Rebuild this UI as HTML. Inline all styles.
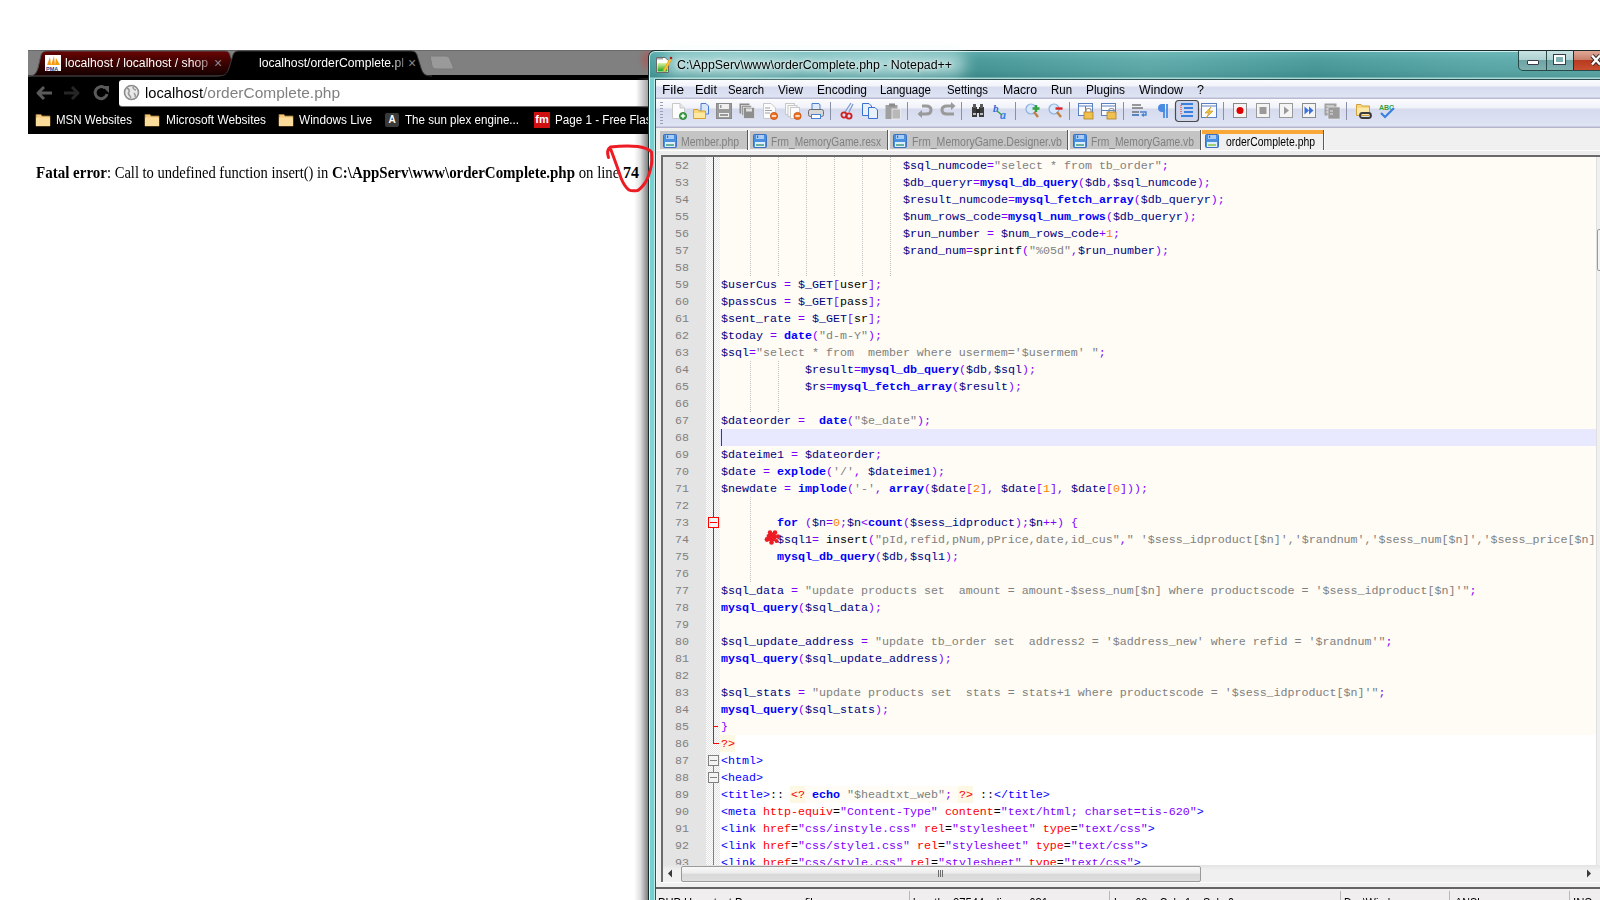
<!DOCTYPE html>
<html><head><meta charset="utf-8"><style>
html,body{margin:0;padding:0}
body{width:1600px;height:900px;overflow:hidden;position:relative;background:#fff}
.t{position:absolute;white-space:pre;transform-origin:0 0;line-height:normal}
.code{position:absolute;white-space:pre;font:11.6667px/17px 'Liberation Mono',monospace;height:17px}
</style></head><body>

<div style="position:absolute;left:28px;top:50px;width:640px;height:84px;background:#000"></div>
<div style="position:absolute;left:28px;top:50px;width:640px;height:25px;background:#808080"></div><div style="position:absolute;left:28px;top:50px;width:640px;height:1px;background:#6a6a6a"></div>
<!-- tab 1 red -->
<svg style="position:absolute;left:28px;top:50px" width="220" height="27">
 <defs><linearGradient id="rg" x1="0" y1="0" x2="0" y2="1"><stop offset="0" stop-color="#6a0404"/><stop offset="0.5" stop-color="#3a0202"/><stop offset="1" stop-color="#140000"/></linearGradient></defs>
 <path d="M0,26 C6,26 8,24 10,18 L13,5 C14,2 16,1 20,1 L196,1 C200,1 201,2 202,5 L206,18 C208,24 210,26 217,26 Z" fill="url(#rg)" stroke="#555" stroke-width="1"/>
</svg>
<!-- tab 2 black active -->
<svg style="position:absolute;left:218px;top:50px" width="222" height="27">
 <path d="M0,27 L0,26 C7,26 9,24 11,18 L15,5 C16,2 18,1 22,1 L192,1 C196,1 198,2 199,5 L203,18 C205,24 207,26 214,26 L214,27 Z" fill="#000"/><path d="M0,26 C7,26 9,24 11,18 L15,5 C16,2 18,1 22,1 L192,1 C196,1 198,2 199,5 L203,18 C205,24 207,26 214,26" fill="none" stroke="#3a3a3a" stroke-width="1"/>
</svg>
<!-- new tab button -->
<svg style="position:absolute;left:428px;top:54px" width="30" height="18">
 <path d="M2,2 L18,2 C20,2 21,3 22,5 L26,15 L8,15 C6,15 5,14 4,12 Z" fill="#9a9a9a" stroke="#7a7a7a" stroke-width="1"/>
</svg>
<!-- omnibox -->
<div style="position:absolute;left:119px;top:80px;width:560px;height:26px;background:#fff;border-radius:3px;box-shadow:0 1px 0 #6a6a6a"></div>
<!-- globe -->
<svg style="position:absolute;left:123px;top:84px" width="17" height="17" viewBox="0 0 17 17">
 <circle cx="8.5" cy="8.5" r="7" fill="#e8e8e8" stroke="#8a8a8a" stroke-width="1.6"/>
 <path d="M4,4 C6,5 7,6 6,8 C5,9 6,11 7,12 L8,14 M10,3 C10,5 12,6 13,6 M11,9 C12,10 13,11 12,13" stroke="#9a9a9a" stroke-width="1.6" fill="none"/>
</svg>
<!-- nav arrows -->
<svg style="position:absolute;left:34px;top:84px" width="80" height="18" viewBox="0 0 80 18">
 <path d="M10,3 L4,9 L10,15 M4,9 L18,9" stroke="#5a5a5a" stroke-width="3" fill="none" stroke-linejoin="round"/>
 <path d="M38,3 L44,9 L38,15 M44,9 L30,9" stroke="#262626" stroke-width="3" fill="none" stroke-linejoin="round"/>
 <path d="M71,4 A6,6 0 1 0 73,10" stroke="#5a5a5a" stroke-width="3" fill="none"/>
 <path d="M68,2 L75,2 L75,9 Z" fill="#5a5a5a"/>
</svg>

<div class="t" style="left:65px;top:56px;font:12px 'Liberation Sans',sans-serif;color:#fff;transform:scaleX(1.0160);-webkit-mask-image:linear-gradient(90deg,#000 88%,rgba(0,0,0,0.45));mask-image:linear-gradient(90deg,#000 88%,rgba(0,0,0,0.45))">localhost / localhost / shop</div>
<svg style="position:absolute;left:45px;top:55px" width="16" height="16" viewBox="0 0 16 16"><rect x="0" y="0" width="16" height="16" fill="#fff"/><path d="M2,10 L5,2 L6,10 Z M6,10 L9,1 L10,10 Z M10,10 L11,3 L15,10 Z" fill="#f89a10"/><text x="1" y="15.5" font-family="Liberation Sans" font-weight="bold" font-size="5.5" fill="#2a3a8a">PMA</text></svg>
<div class="t" style="left:214px;top:55px;font:14px 'Liberation Sans',sans-serif;color:#8a8a8a;">×</div>
<div class="t" style="left:259px;top:56px;font:12px 'Liberation Sans',sans-serif;color:#fff;transform:scaleX(1.0158);-webkit-mask-image:linear-gradient(90deg,#000 90%,rgba(0,0,0,0.4));mask-image:linear-gradient(90deg,#000 90%,rgba(0,0,0,0.4))">localhost/orderComplete.pl</div>
<div class="t" style="left:408px;top:55px;font:14px 'Liberation Sans',sans-serif;color:#8a8a8a;">×</div>
<div class="t" style="left:145px;top:84px;font:15px 'Liberation Sans',sans-serif;color:#000;transform:scaleX(0.9797);">localhost</div>
<div class="t" style="left:203px;top:84px;font:15px 'Liberation Sans',sans-serif;color:#808080;transform:scaleX(1.0334);">/orderComplete.php</div>
<svg style="position:absolute;left:35px;top:112px" width="16" height="15" viewBox="0 0 16 15">
 <path d="M1,2.5 L6,2.5 L7,4 L15,4 L15,14 L1,14 Z" fill="#f4c77a" stroke="#9a7a3a" stroke-width="0.8"/>
 <path d="M1,5.5 L15,5.5 L15,14 L1,14 Z" fill="#fbdc9a"/>
</svg>
<svg style="position:absolute;left:144px;top:112px" width="16" height="15" viewBox="0 0 16 15">
 <path d="M1,2.5 L6,2.5 L7,4 L15,4 L15,14 L1,14 Z" fill="#f4c77a" stroke="#9a7a3a" stroke-width="0.8"/>
 <path d="M1,5.5 L15,5.5 L15,14 L1,14 Z" fill="#fbdc9a"/>
</svg>
<svg style="position:absolute;left:278px;top:112px" width="16" height="15" viewBox="0 0 16 15">
 <path d="M1,2.5 L6,2.5 L7,4 L15,4 L15,14 L1,14 Z" fill="#f4c77a" stroke="#9a7a3a" stroke-width="0.8"/>
 <path d="M1,5.5 L15,5.5 L15,14 L1,14 Z" fill="#fbdc9a"/>
</svg>
<div class="t" style="left:56px;top:113px;font:12px 'Liberation Sans',sans-serif;color:#fff;transform:scaleX(0.9603);">MSN Websites</div>
<div class="t" style="left:166px;top:113px;font:12px 'Liberation Sans',sans-serif;color:#fff;transform:scaleX(0.9887);">Microsoft Websites</div>
<div class="t" style="left:299px;top:113px;font:12px 'Liberation Sans',sans-serif;color:#fff;transform:scaleX(0.9861);">Windows Live</div>
<div style="position:absolute;left:385px;top:113px;width:14px;height:14px;background:#3a3a3a;border-radius:2px;color:#fff;font:bold 10px 'Liberation Sans';text-align:center;line-height:14px">A</div>
<div class="t" style="left:405px;top:113px;font:12px 'Liberation Sans',sans-serif;color:#fff;transform:scaleX(0.9655);">The sun plex engine...</div>
<div style="position:absolute;left:534px;top:112px;width:16px;height:16px;background:#d01010;color:#fff;font:bold 11px 'Liberation Sans';text-align:center;line-height:15px">fm</div>
<div class="t" style="left:555px;top:113px;font:12px 'Liberation Sans',sans-serif;color:#fff;transform:scaleX(0.9711);">Page 1 - Free Flash</div>
<div class="t" style="left:36px;top:164px;font:bold 16px 'Liberation Serif',serif;color:#000;transform:scaleX(0.9383);">Fatal error</div>
<div class="t" style="left:107px;top:164px;font:16px 'Liberation Serif',serif;color:#000;transform:scaleX(0.9091);">: Call to undefined function insert() in </div>
<div class="t" style="left:332px;top:164px;font:bold 16px 'Liberation Serif',serif;color:#000;transform:scaleX(0.9346);">C:\AppServ\www\orderComplete.php</div>
<div class="t" style="left:575px;top:164px;font:16px 'Liberation Serif',serif;color:#000;transform:scaleX(0.9231);"> on line </div>
<div class="t" style="left:623px;top:164px;font:bold 16px 'Liberation Serif',serif;color:#000;transform:scaleX(1.0000);">74</div>
<div style="position:absolute;left:634px;top:134px;width:14px;height:766px;background:linear-gradient(90deg,rgba(0,0,0,0),rgba(0,0,0,0.12) 45%,rgba(0,0,0,0.5))"></div>
<div style="position:absolute;left:636px;top:78px;width:13px;height:30px;background:linear-gradient(90deg,rgba(0,0,0,0),rgba(60,60,60,0.5))"></div><div style="position:absolute;left:636px;top:51px;width:13px;height:24px;overflow:hidden"><div style="position:absolute;left:2px;top:-3px;width:14px;height:26px;background:radial-gradient(ellipse at 70% 45%,rgba(200,60,60,0.55),rgba(200,60,60,0) 70%);filter:blur(1.5px)"></div></div>

<div style="position:absolute;left:648px;top:50px;width:960px;height:860px;background:#1a2c2c;border-top-left-radius:7px"></div>
<div style="position:absolute;left:649px;top:51px;width:960px;height:860px;border-top-left-radius:6px;background:#cdeeee"></div>
<div style="position:absolute;left:650px;top:52px;width:960px;height:860px;border-top-left-radius:5px;
 background:
  linear-gradient(100deg, rgba(255,255,255,0) 0%, rgba(255,255,255,0.12) 8%, rgba(255,255,255,0) 14%, rgba(255,255,255,0.10) 22%, rgba(0,0,0,0.05) 30%, rgba(255,255,255,0.10) 45%, rgba(0,0,0,0.04) 60%, rgba(255,255,255,0.08) 75%, rgba(255,255,255,0.12) 92%, rgba(255,255,255,0.05) 100%),
  linear-gradient(#5fb0b0 0px, #52a4a4 8px, #4a9c9c 18px, #3f9090 25px, #a8d8d8 26px, #72d0d0 27px, #72d0d0 100%)"></div>
<div style="position:absolute;left:649px;top:78px;width:1px;height:830px;background:#dcfafa"></div>
<div style="position:absolute;left:654px;top:78px;width:1px;height:830px;background:#bfeaea"></div>
<div style="position:absolute;left:654px;top:78px;width:960px;height:1px;background:#a8d8d8"></div>
<div style="position:absolute;left:655px;top:79px;width:960px;height:830px;background:#2e5050"></div>
<div style="position:absolute;left:656px;top:80px;width:960px;height:830px;background:#f0f0f0"></div>
<div style="position:absolute;left:665px;top:52px;width:300px;height:24px;background:rgba(230,250,250,0.55);filter:blur(7px);border-radius:10px"></div>
<!-- menu bar -->
<div style="position:absolute;left:656px;top:80px;width:944px;height:19px;background:linear-gradient(#fbfcfe 0px,#f2f4fa 6px,#d6dbee 7px,#dfe4f4 17px,#babbd2 18px,#babbd2 19px)"></div>
<!-- toolbar -->
<div style="position:absolute;left:656px;top:99px;width:944px;height:29px;background:linear-gradient(#fcfcfe 0px,#f0f2f9 9px,#d5daee 10px,#dfe4f4 27px,#b5b6cd 28px,#b5b6cd 29px)"></div>
<!-- gripper -->
<div style="position:absolute;left:660px;top:102px;width:3px;height:22px;background:repeating-linear-gradient(#9aa0b8 0 1px, transparent 1px 3px)"></div>
<!-- tab bar area lines -->
<div style="position:absolute;left:656px;top:150px;width:944px;height:1px;background:#fdfdfd"></div>
<div style="position:absolute;left:656px;top:151px;width:944px;height:3px;background:#ececec"></div>
<!-- caption buttons -->
<div style="position:absolute;left:1518px;top:51px;width:100px;height:19px;border:1px solid #2a4a4a;border-top:none;border-bottom-left-radius:5px;background:linear-gradient(#c8e2e2, #b0d2d2 45%, #6ea4a4 50%, #7fb0b0)"></div>
<div style="position:absolute;left:1546px;top:51px;width:1px;height:19px;background:#2a4a4a"></div>
<div style="position:absolute;left:1573px;top:51px;width:40px;height:19px;background:linear-gradient(#e0a898, #c8806c 45%, #b83a20 50%, #c85030)"></div>
<div style="position:absolute;left:1573px;top:51px;width:1px;height:19px;background:#5a1a10"></div>
<div style="position:absolute;left:1527px;top:60px;width:10px;height:3px;background:#fff;border:1px solid #3a3a4a;border-radius:1px"></div>
<div style="position:absolute;left:1554px;top:55px;width:7px;height:5px;border:2px solid #fff;outline:1px solid #3a3a4a;background:#7fb0b0"></div>
<svg style="position:absolute;left:1590px;top:54px" width="12" height="12"><path d="M2,1.5 L10,10.5 M10,1.5 L2,10.5" stroke="#3a2a2a" stroke-width="4.2"/><path d="M2,1.5 L10,10.5 M10,1.5 L2,10.5" stroke="#fff" stroke-width="2.4"/></svg>
<!-- title icon -->
<svg style="position:absolute;left:655px;top:56px" width="18" height="18" viewBox="0 0 18 18">
 <defs><linearGradient id="ng" x1="0" y1="0" x2="0" y2="1"><stop offset="0" stop-color="#e0f4a0"/><stop offset="1" stop-color="#18a018"/></linearGradient></defs>
 <path d="M1.5,1.5 L10,1.5 L13.5,4.5 L13.5,16.5 L1.5,16.5 Z" fill="#fff" stroke="#6a6a6a" stroke-width="1"/>
 <rect x="2.5" y="7" width="10" height="8.5" fill="url(#ng)"/>
 <path d="M3,2 L3,3.5 M5,2 L5,3.5 M7,2 L7,3.5" stroke="#555" stroke-width="1"/>
 <path d="M9,15 L15.5,3.5" stroke="#f0a818" stroke-width="2.6"/>
 <path d="M9,15 L15.5,3.5" stroke="#ffd860" stroke-width="0.8"/>
 <circle cx="16" cy="2" r="1.3" fill="#b01818"/>
</svg>

<div class="t" style="left:677px;top:58px;font:12px 'Liberation Sans',sans-serif;color:#000;transform:scaleX(1.0307);text-shadow:0 0 6px rgba(255,255,255,0.9),0 0 3px rgba(255,255,255,0.8)">C:\AppServ\www\orderComplete.php - Notepad++</div>
<div class="t" style="left:662px;top:83px;font:12px 'Liberation Sans',sans-serif;color:#000;transform:scaleX(1.1373);">File</div>
<div class="t" style="left:695px;top:83px;font:12px 'Liberation Sans',sans-serif;color:#000;transform:scaleX(1.0634);">Edit</div>
<div class="t" style="left:728px;top:83px;font:12px 'Liberation Sans',sans-serif;color:#000;transform:scaleX(0.9466);">Search</div>
<div class="t" style="left:778px;top:83px;font:12px 'Liberation Sans',sans-serif;color:#000;transform:scaleX(0.9691);">View</div>
<div class="t" style="left:817px;top:83px;font:12px 'Liberation Sans',sans-serif;color:#000;transform:scaleX(0.9991);">Encoding</div>
<div class="t" style="left:880px;top:83px;font:12px 'Liberation Sans',sans-serif;color:#000;transform:scaleX(0.9552);">Language</div>
<div class="t" style="left:947px;top:83px;font:12px 'Liberation Sans',sans-serif;color:#000;transform:scaleX(0.9456);">Settings</div>
<div class="t" style="left:1003px;top:83px;font:12px 'Liberation Sans',sans-serif;color:#000;transform:scaleX(1.0197);">Macro</div>
<div class="t" style="left:1051px;top:83px;font:12px 'Liberation Sans',sans-serif;color:#000;transform:scaleX(0.9539);">Run</div>
<div class="t" style="left:1086px;top:83px;font:12px 'Liberation Sans',sans-serif;color:#000;transform:scaleX(0.9909);">Plugins</div>
<div class="t" style="left:1139px;top:83px;font:12px 'Liberation Sans',sans-serif;color:#000;transform:scaleX(1.0307);">Window</div>
<div class="t" style="left:1197px;top:83px;font:12px 'Liberation Sans',sans-serif;color:#000;transform:scaleX(1.0467);">?</div>
<div style="position:absolute;left:830px;top:102px;width:1px;height:18px;background:#8a8fa8"></div>
<div style="position:absolute;left:907px;top:102px;width:1px;height:18px;background:#8a8fa8"></div>
<div style="position:absolute;left:961px;top:102px;width:1px;height:18px;background:#8a8fa8"></div>
<div style="position:absolute;left:1015px;top:102px;width:1px;height:18px;background:#8a8fa8"></div>
<div style="position:absolute;left:1069px;top:102px;width:1px;height:18px;background:#8a8fa8"></div>
<div style="position:absolute;left:1123px;top:102px;width:1px;height:18px;background:#8a8fa8"></div>
<div style="position:absolute;left:1223px;top:102px;width:1px;height:18px;background:#8a8fa8"></div>
<div style="position:absolute;left:1346px;top:102px;width:1px;height:18px;background:#8a8fa8"></div>
<svg style="position:absolute;left:0;top:0" width="1600" height="130"><g transform="translate(671,103)"><path d="M1.5,0.5 L9,0.5 L13.5,5 L13.5,15.5 L1.5,15.5 Z" fill="#fcfcfc" stroke="#c8c8c8"/><path d="M9,0.5 L9,5 L13.5,5" fill="#e8e8e8" stroke="#c8c8c8"/><circle cx="12" cy="13" r="3.6" fill="#3aa040" stroke="#2a7a30" stroke-width="0.8"/><path d="M12,10.8 L12,15.2 M9.8,13 L14.2,13" stroke="#fff" stroke-width="1.4"/></g><g transform="translate(693,103)"><path d="M8,0.5 L13,0.5 L15.5,3 L15.5,11 L8,11 Z" fill="#d8e8fc" stroke="#4a7ad0"/><path d="M0.5,6.5 L5,6.5 L6,8 L12.5,8 L12.5,15.5 L0.5,15.5 Z" fill="#f8d878" stroke="#d8a030"/><path d="M1,10 L12,10 L12,15 L1,15 Z" fill="#fce8a0"/></g><g transform="translate(716,103)"><rect x="0.5" y="0.5" width="15" height="15" fill="#9a9a9a" stroke="#8a8a8a"/><rect x="3" y="1" width="10" height="5" fill="#f0f0f0"/><rect x="4" y="2" width="1.5" height="3" fill="#9a9a9a"/><rect x="3" y="10" width="10" height="4" fill="#f0f0f0"/><rect x="4" y="11" width="8" height="2" fill="#9a9a9a"/></g><g transform="translate(739,103)"><rect x="0.5" y="0.5" width="10" height="10" fill="#8a8a8a"/><rect x="2.5" y="2.5" width="10" height="10" fill="#999" stroke="#f0f0f0" stroke-width="0.6"/><rect x="4.5" y="4.5" width="11" height="11" fill="#8e8e8e" stroke="#f0f0f0" stroke-width="0.6"/><rect x="7" y="5.5" width="6" height="3" fill="#e0e0e0"/></g><g transform="translate(762,103)"><path d="M1.5,0.5 L9,0.5 L13.5,5 L13.5,15.5 L1.5,15.5 Z" fill="#fcfcfc" stroke="#c8c8c8"/><path d="M3,5 L8,5 M3,7.5 L10,7.5 M3,10 L8,10" stroke="#a0a0a0"/><circle cx="12" cy="13" r="3.6" fill="#f07020" stroke="#c05010" stroke-width="0.8"/><path d="M9.8,13 L14.2,13" stroke="#fff" stroke-width="1.5"/></g><g transform="translate(785,103)"><rect x="0.5" y="0.5" width="9" height="11" fill="#fafafa" stroke="#c8c8c8"/><rect x="3" y="2.5" width="9" height="11" fill="#fafafa" stroke="#c8c8c8"/><rect x="5.5" y="4.5" width="9" height="11" fill="#fcfcfc" stroke="#c8c8c8"/><circle cx="12.5" cy="13" r="3.6" fill="#f07020" stroke="#c05010" stroke-width="0.8"/><path d="M10.3,13 L14.7,13" stroke="#fff" stroke-width="1.5"/></g><g transform="translate(808,103)"><path d="M4,0.5 L11,0.5 L12,2 L12,7 L4,7 Z" fill="#e0ecfc" stroke="#4a80d0"/><rect x="0.5" y="6.5" width="15" height="7" rx="2" fill="#d8d8d8" stroke="#6a6a6a"/><rect x="3.5" y="11.5" width="9" height="4" fill="#fff" stroke="#4a80d0"/></g><g transform="translate(840,103)"><path d="M5,9 L11,0 M9,9 L13,1" stroke="#7a9ad0" stroke-width="1.3"/><circle cx="4" cy="12" r="2.6" fill="none" stroke="#d02020" stroke-width="1.8"/><circle cx="9" cy="13" r="2.6" fill="none" stroke="#d02020" stroke-width="1.8"/></g><g transform="translate(862,103)"><path d="M0.5,0.5 L7,0.5 L9.5,3 L9.5,12.5 L0.5,12.5 Z" fill="#e8f0fc" stroke="#3a70d0"/><path d="M6.5,4.5 L13,4.5 L15.5,7 L15.5,15.5 L6.5,15.5 Z" fill="#e8f0fc" stroke="#3a70d0"/></g><g transform="translate(885,103)"><rect x="0.5" y="2" width="12" height="14" fill="#a0a0a0"/><rect x="4" y="0.5" width="6" height="3" fill="#8a8a8a"/><rect x="7" y="6" width="8.5" height="10" fill="#b8b8b8" stroke="#f0f0f0" stroke-width="0.8"/></g><g transform="translate(917,103)"><path d="M2,11 L9,11 C13,11 14,9 14,7 C14,5 13,3 9,3 L5,3" fill="none" stroke="#9a9a9a" stroke-width="3"/><path d="M0.5,11 L5,7 L5,15 Z" fill="#9a9a9a"/></g><g transform="translate(940,103)"><path d="M14,11 L7,11 C3,11 2,9 2,7 C2,5 3,3 7,3 L11,3" fill="none" stroke="#9a9a9a" stroke-width="3"/><path d="M15.5,3 L11,-1 L11,7 Z" fill="#9a9a9a"/></g><g transform="translate(971,103)"><rect x="1" y="4" width="5" height="10" fill="#3a3a3a"/><rect x="8" y="4" width="5" height="10" fill="#3a3a3a"/><rect x="2" y="1" width="3" height="4" fill="#5a5a5a"/><rect x="9" y="1" width="3" height="4" fill="#5a5a5a"/><rect x="5" y="6" width="4" height="4" fill="#2a2a2a"/><rect x="2" y="10" width="3" height="2" fill="#bbb"/><rect x="9" y="10" width="3" height="2" fill="#bbb"/></g><g transform="translate(993,103)"><text x="0" y="9" font-family="Liberation Serif" font-style="italic" font-weight="bold" font-size="11" fill="#2a6ad8">b</text><text x="7" y="16" font-family="Liberation Serif" font-style="italic" font-weight="bold" font-size="12" fill="#3a80e0">a</text><path d="M4,8 L9,12" stroke="#30a040" stroke-width="1.5"/></g><g transform="translate(1025,103)"><circle cx="6" cy="6" r="5" fill="#d8e8fc" stroke="#8ab0e0" stroke-width="1.2"/><path d="M9,9 L13,14" stroke="#c08040" stroke-width="2.4"/><path d="M11,2 L11,9 M7.5,5.5 L14.5,5.5" stroke="#30a040" stroke-width="2.4"/></g><g transform="translate(1048,103)"><circle cx="6" cy="6" r="5" fill="#d8e8fc" stroke="#8ab0e0" stroke-width="1.2"/><path d="M9,9 L13,14" stroke="#c08040" stroke-width="2.4"/><path d="M7.5,5.5 L14.5,5.5" stroke="#e02020" stroke-width="2.4"/></g><g transform="translate(1078,103)"><rect x="0.5" y="0.5" width="14" height="12" fill="#fafcff" stroke="#5a80c0"/><path d="M0.5,3 L14.5,3 M7.5,3 L7.5,12.5" stroke="#5a80c0"/><rect x="6" y="9" width="9" height="7" fill="#f0c050" stroke="#b08020" stroke-width="0.8"/><path d="M8,9 L8,7 C8,5 13,5 13,7 L13,9" fill="none" stroke="#909090" stroke-width="1.2"/></g><g transform="translate(1101,103)"><rect x="0.5" y="0.5" width="14" height="12" fill="#fafcff" stroke="#5a80c0"/><path d="M0.5,3 L14.5,3 M0.5,7.5 L14.5,7.5" stroke="#5a80c0"/><rect x="6" y="9" width="9" height="7" fill="#f0c050" stroke="#b08020" stroke-width="0.8"/><path d="M8,9 L8,7 C8,5 13,5 13,7 L13,9" fill="none" stroke="#909090" stroke-width="1.2"/></g><g transform="translate(1131,103)"><path d="M1,2 L10,2 M1,5 L12,5 M1,9 L8,9 M1,12 L8,12" stroke="#3a3a3a" stroke-width="1.2"/><path d="M1,12 L8,12" stroke="#4a80d0" stroke-width="1.5"/><path d="M9,9 L15,9 L15,12 L11,12" fill="none" stroke="#4a80d0" stroke-width="1.4"/><path d="M10,12 L13,10 L13,14 Z" fill="#4a80d0"/></g><g transform="translate(1157,103)"><path d="M7,1 L7,15 M10,1 L10,15" stroke="#4a8ae0" stroke-width="1.8"/><path d="M8,1 L5,1 C2,1 1,3 1,5 C1,7 2,9 5,9 L8,9 Z" fill="#4a8ae0"/></g><g transform="translate(1175,102)"><rect x="0.5" y="-1.5" width="23" height="21" rx="3" fill="#cfd6ec" stroke="#4a4a4a" stroke-width="1.2"/><path d="M6,2 L18,2 M9,6 L18,6 M9,10 L18,10 M6,14 L18,14" stroke="#3a80e0" stroke-width="1.8"/><path d="M6,3 L6,13" stroke="#e02020" stroke-width="1" stroke-dasharray="1,1"/></g><g transform="translate(1201,103)"><rect x="0.5" y="0.5" width="15" height="14" fill="#fafcff" stroke="#5a80c0"/><path d="M0.5,3 L15.5,3" stroke="#5a80c0"/><path d="M10,4 L4,10 L8,10 L5,15 L12,8 L8,8 Z" fill="#f0c040" stroke="#c09020" stroke-width="0.6"/></g><g transform="translate(1233,103)"><rect x="0.5" y="0.5" width="13" height="14" fill="#f4f4f4" stroke="#8a8a8a"/><circle cx="7" cy="7.5" r="3.5" fill="#e00000"/></g><g transform="translate(1256,103)"><rect x="0.5" y="0.5" width="13" height="14" fill="#f4f4f4" stroke="#9a9a9a"/><rect x="3.5" y="4" width="7" height="7" fill="#9a9a9a"/></g><g transform="translate(1279,103)"><rect x="0.5" y="0.5" width="13" height="14" fill="#f4f4f4" stroke="#9a9a9a"/><path d="M5,3.5 L10,7.5 L5,11.5 Z" fill="#9a9a9a"/></g><g transform="translate(1302,103)"><rect x="0.5" y="0.5" width="13" height="14" fill="#f4f4f4" stroke="#8a8a8a"/><path d="M2.5,3.5 L7,7.5 L2.5,11.5 Z M7,3.5 L11.5,7.5 L7,11.5 Z" fill="#3a70e0"/></g><g transform="translate(1324,103)"><rect x="0.5" y="0.5" width="12" height="12" fill="#a0a0a0"/><rect x="4" y="4" width="12" height="12" fill="#9a9a9a" stroke="#f0f0f0" stroke-width="0.6"/><path d="M2,3 L10,3 M2,6 L4,6 M2,9 L4,9 M6,8 L9,8 M6,11 L9,11" stroke="#e8e8e8" stroke-width="1"/></g><g transform="translate(1356,103)"><path d="M0.5,1.5 L5,1.5 L6,3 L13.5,3 L13.5,12.5 L0.5,12.5 Z" fill="#f8d878" stroke="#d0a040"/><path d="M1,5 L13,5 L13,12 L1,12 Z" fill="#fce8a8"/><rect x="4" y="10" width="11" height="5" rx="2.5" fill="none" stroke="#3a3a3a" stroke-width="1.8"/></g><g transform="translate(1378,103)"><text x="1" y="7" font-family="Liberation Sans" font-weight="bold" font-size="7" fill="#30a040">ABC</text><path d="M3,10 L7,14 L16,5" fill="none" stroke="#3a80e0" stroke-width="2.2"/></g></svg>
<div style="position:absolute;left:660px;top:131px;width:87px;height:18px;background:#c4c4c4"></div>
<div style="position:absolute;left:747px;top:130px;width:1px;height:20px;background:#5a5a5a"></div><div style="position:absolute;left:748px;top:130px;width:1px;height:20px;background:#fafafa"></div>
<svg style="position:absolute;left:663px;top:134px" width="14" height="14" viewBox="0 0 14 14"><rect x="0.5" y="0.5" width="13" height="13" rx="1" fill="#4a90e0" stroke="#3a70c0"/><rect x="3" y="1" width="8" height="4" fill="#a8ccf4"/><rect x="4" y="1.5" width="1.2" height="2.5" fill="#3a70c0"/><rect x="2" y="8" width="10" height="5" fill="#e0eefc"/><rect x="3" y="10" width="8" height="2" fill="#6ab0a0"/></svg>
<div class="t" style="left:681px;top:135px;font:12px 'Liberation Sans',sans-serif;color:#808080;transform:scaleX(0.8695);">Member.php</div>
<div style="position:absolute;left:750px;top:131px;width:137px;height:18px;background:#c4c4c4"></div>
<div style="position:absolute;left:887px;top:130px;width:1px;height:20px;background:#5a5a5a"></div><div style="position:absolute;left:888px;top:130px;width:1px;height:20px;background:#fafafa"></div>
<svg style="position:absolute;left:753px;top:134px" width="14" height="14" viewBox="0 0 14 14"><rect x="0.5" y="0.5" width="13" height="13" rx="1" fill="#4a90e0" stroke="#3a70c0"/><rect x="3" y="1" width="8" height="4" fill="#a8ccf4"/><rect x="4" y="1.5" width="1.2" height="2.5" fill="#3a70c0"/><rect x="2" y="8" width="10" height="5" fill="#e0eefc"/><rect x="3" y="10" width="8" height="2" fill="#6ab0a0"/></svg>
<div class="t" style="left:771px;top:135px;font:12px 'Liberation Sans',sans-serif;color:#808080;transform:scaleX(0.8461);">Frm_MemoryGame.resx</div>
<div style="position:absolute;left:890px;top:131px;width:177px;height:18px;background:#c4c4c4"></div>
<div style="position:absolute;left:1067px;top:130px;width:1px;height:20px;background:#5a5a5a"></div><div style="position:absolute;left:1068px;top:130px;width:1px;height:20px;background:#fafafa"></div>
<svg style="position:absolute;left:893px;top:134px" width="14" height="14" viewBox="0 0 14 14"><rect x="0.5" y="0.5" width="13" height="13" rx="1" fill="#4a90e0" stroke="#3a70c0"/><rect x="3" y="1" width="8" height="4" fill="#a8ccf4"/><rect x="4" y="1.5" width="1.2" height="2.5" fill="#3a70c0"/><rect x="2" y="8" width="10" height="5" fill="#e0eefc"/><rect x="3" y="10" width="8" height="2" fill="#6ab0a0"/></svg>
<div class="t" style="left:912px;top:135px;font:12px 'Liberation Sans',sans-serif;color:#808080;transform:scaleX(0.8786);">Frm_MemoryGame.Designer.vb</div>
<div style="position:absolute;left:1070px;top:131px;width:130px;height:18px;background:#c4c4c4"></div>
<div style="position:absolute;left:1200px;top:130px;width:1px;height:20px;background:#5a5a5a"></div><div style="position:absolute;left:1201px;top:130px;width:1px;height:20px;background:#fafafa"></div>
<svg style="position:absolute;left:1073px;top:134px" width="14" height="14" viewBox="0 0 14 14"><rect x="0.5" y="0.5" width="13" height="13" rx="1" fill="#4a90e0" stroke="#3a70c0"/><rect x="3" y="1" width="8" height="4" fill="#a8ccf4"/><rect x="4" y="1.5" width="1.2" height="2.5" fill="#3a70c0"/><rect x="2" y="8" width="10" height="5" fill="#e0eefc"/><rect x="3" y="10" width="8" height="2" fill="#6ab0a0"/></svg>
<div class="t" style="left:1091px;top:135px;font:12px 'Liberation Sans',sans-serif;color:#808080;transform:scaleX(0.8581);">Frm_MemoryGame.vb</div>
<div style="position:absolute;left:1202px;top:130px;width:121px;height:4px;background:#faa73a"></div>
<div style="position:absolute;left:1323px;top:130px;width:1px;height:20px;background:#5a5a5a"></div><div style="position:absolute;left:1324px;top:130px;width:1px;height:20px;background:#fafafa"></div>
<svg style="position:absolute;left:1205px;top:134px" width="14" height="14" viewBox="0 0 14 14"><rect x="0.5" y="0.5" width="13" height="13" rx="1" fill="#4a90e0" stroke="#3a70c0"/><rect x="3" y="1" width="8" height="4" fill="#a8ccf4"/><rect x="4" y="1.5" width="1.2" height="2.5" fill="#3a70c0"/><rect x="2" y="8" width="10" height="5" fill="#e0eefc"/><rect x="3" y="10" width="8" height="2" fill="#9ad070"/></svg>
<div class="t" style="left:1226px;top:135px;font:12px 'Liberation Sans',sans-serif;color:#000;transform:scaleX(0.8663);">orderComplete.php</div>

<div style="position:absolute;left:656px;top:155px;width:5px;height:727px;background:linear-gradient(90deg,#fafafa 1px,#efefef 1px)"></div><div style="position:absolute;left:661px;top:155px;width:950px;height:728px;background:#6a6a6a"></div>
<div style="position:absolute;left:661px;top:156px;width:950px;height:726px;background:#6a6a6a"></div><div style="position:absolute;left:661px;top:882px;width:950px;height:1px;background:#fcfcfc"></div>
<div style="position:absolute;left:663px;top:157px;width:950px;height:725px;background:#fff"></div>
<div style="position:absolute;left:663px;top:157px;width:43px;height:708px;background:#e4e4e4"></div>
<div style="position:absolute;left:706px;top:157px;width:14px;height:708px;background-color:#fff;background-image:repeating-conic-gradient(#e2e2e2 0 25%, #ffffff 0 50%);background-size:2px 2px"></div>

<div style="position:absolute;left:720px;top:157px;width:876px;height:578px;background:#fefcf5"></div>
<div style="position:absolute;left:720px;top:429px;width:876px;height:17px;background:#e8e8ff"></div>
<div style="position:absolute;left:721px;top:429px;width:1px;height:17px;background:#8000ff"></div>
<div style="position:absolute;left:720px;top:735px;width:15px;height:17px;background:#fdf8e3"></div>
<div style="position:absolute;left:790px;top:786px;width:183px;height:17px;background:#fefcf5"></div>
<div style="position:absolute;left:790px;top:786px;width:15px;height:17px;background:#fdf8e3"></div>
<div style="position:absolute;left:958px;top:786px;width:15px;height:17px;background:#fdf8e3"></div>
<div style="position:absolute;left:750px;top:157px;width:1px;height:119px;background:repeating-linear-gradient(#c0c0c0 0 1px, transparent 1px 2px)"></div>
<div style="position:absolute;left:778px;top:157px;width:1px;height:119px;background:repeating-linear-gradient(#c0c0c0 0 1px, transparent 1px 2px)"></div>
<div style="position:absolute;left:806px;top:157px;width:1px;height:119px;background:repeating-linear-gradient(#c0c0c0 0 1px, transparent 1px 2px)"></div>
<div style="position:absolute;left:834px;top:157px;width:1px;height:119px;background:repeating-linear-gradient(#c0c0c0 0 1px, transparent 1px 2px)"></div>
<div style="position:absolute;left:862px;top:157px;width:1px;height:119px;background:repeating-linear-gradient(#c0c0c0 0 1px, transparent 1px 2px)"></div>
<div style="position:absolute;left:890px;top:157px;width:1px;height:119px;background:repeating-linear-gradient(#c0c0c0 0 1px, transparent 1px 2px)"></div>
<div style="position:absolute;left:750px;top:361px;width:1px;height:51px;background:repeating-linear-gradient(#c0c0c0 0 1px, transparent 1px 2px)"></div>
<div style="position:absolute;left:778px;top:361px;width:1px;height:51px;background:repeating-linear-gradient(#c0c0c0 0 1px, transparent 1px 2px)"></div>
<div style="position:absolute;left:750px;top:497px;width:1px;height:85px;background:repeating-linear-gradient(#c0c0c0 0 1px, transparent 1px 2px)"></div>
<div style="position:absolute;left:713px;top:157px;width:1px;height:587px;background:#ff0000"></div>
<div style="position:absolute;left:713px;top:726px;width:5px;height:1px;background:#ff0000"></div>
<div style="position:absolute;left:713px;top:743px;width:6px;height:1px;background:#ff0000"></div>
<div style="position:absolute;left:708px;top:517px;width:9px;height:9px;border:1px solid #ff0000;background:#f3f3f3"></div>
<div style="position:absolute;left:710px;top:522px;width:7px;height:1px;background:#ff0000"></div>
<div style="position:absolute;left:713px;top:766px;width:1px;height:99px;background:#808080"></div>
<div style="position:absolute;left:708px;top:755px;width:9px;height:9px;border:1px solid #808080;background:#f3f3f3"></div>
<div style="position:absolute;left:710px;top:760px;width:7px;height:1px;background:#808080"></div>
<div style="position:absolute;left:708px;top:772px;width:9px;height:9px;border:1px solid #808080;background:#f3f3f3"></div>
<div style="position:absolute;left:710px;top:777px;width:7px;height:1px;background:#808080"></div>
<div class="t" style="left:675px;top:158px;font:11.6667px/17px 'Liberation Mono',monospace;color:#808080;">52</div>
<div class="t" style="left:675px;top:175px;font:11.6667px/17px 'Liberation Mono',monospace;color:#808080;">53</div>
<div class="t" style="left:675px;top:192px;font:11.6667px/17px 'Liberation Mono',monospace;color:#808080;">54</div>
<div class="t" style="left:675px;top:209px;font:11.6667px/17px 'Liberation Mono',monospace;color:#808080;">55</div>
<div class="t" style="left:675px;top:226px;font:11.6667px/17px 'Liberation Mono',monospace;color:#808080;">56</div>
<div class="t" style="left:675px;top:243px;font:11.6667px/17px 'Liberation Mono',monospace;color:#808080;">57</div>
<div class="t" style="left:675px;top:260px;font:11.6667px/17px 'Liberation Mono',monospace;color:#808080;">58</div>
<div class="t" style="left:675px;top:277px;font:11.6667px/17px 'Liberation Mono',monospace;color:#808080;">59</div>
<div class="t" style="left:675px;top:294px;font:11.6667px/17px 'Liberation Mono',monospace;color:#808080;">60</div>
<div class="t" style="left:675px;top:311px;font:11.6667px/17px 'Liberation Mono',monospace;color:#808080;">61</div>
<div class="t" style="left:675px;top:328px;font:11.6667px/17px 'Liberation Mono',monospace;color:#808080;">62</div>
<div class="t" style="left:675px;top:345px;font:11.6667px/17px 'Liberation Mono',monospace;color:#808080;">63</div>
<div class="t" style="left:675px;top:362px;font:11.6667px/17px 'Liberation Mono',monospace;color:#808080;">64</div>
<div class="t" style="left:675px;top:379px;font:11.6667px/17px 'Liberation Mono',monospace;color:#808080;">65</div>
<div class="t" style="left:675px;top:396px;font:11.6667px/17px 'Liberation Mono',monospace;color:#808080;">66</div>
<div class="t" style="left:675px;top:413px;font:11.6667px/17px 'Liberation Mono',monospace;color:#808080;">67</div>
<div class="t" style="left:675px;top:430px;font:11.6667px/17px 'Liberation Mono',monospace;color:#808080;">68</div>
<div class="t" style="left:675px;top:447px;font:11.6667px/17px 'Liberation Mono',monospace;color:#808080;">69</div>
<div class="t" style="left:675px;top:464px;font:11.6667px/17px 'Liberation Mono',monospace;color:#808080;">70</div>
<div class="t" style="left:675px;top:481px;font:11.6667px/17px 'Liberation Mono',monospace;color:#808080;">71</div>
<div class="t" style="left:675px;top:498px;font:11.6667px/17px 'Liberation Mono',monospace;color:#808080;">72</div>
<div class="t" style="left:675px;top:515px;font:11.6667px/17px 'Liberation Mono',monospace;color:#808080;">73</div>
<div class="t" style="left:675px;top:532px;font:11.6667px/17px 'Liberation Mono',monospace;color:#808080;">74</div>
<div class="t" style="left:675px;top:549px;font:11.6667px/17px 'Liberation Mono',monospace;color:#808080;">75</div>
<div class="t" style="left:675px;top:566px;font:11.6667px/17px 'Liberation Mono',monospace;color:#808080;">76</div>
<div class="t" style="left:675px;top:583px;font:11.6667px/17px 'Liberation Mono',monospace;color:#808080;">77</div>
<div class="t" style="left:675px;top:600px;font:11.6667px/17px 'Liberation Mono',monospace;color:#808080;">78</div>
<div class="t" style="left:675px;top:617px;font:11.6667px/17px 'Liberation Mono',monospace;color:#808080;">79</div>
<div class="t" style="left:675px;top:634px;font:11.6667px/17px 'Liberation Mono',monospace;color:#808080;">80</div>
<div class="t" style="left:675px;top:651px;font:11.6667px/17px 'Liberation Mono',monospace;color:#808080;">81</div>
<div class="t" style="left:675px;top:668px;font:11.6667px/17px 'Liberation Mono',monospace;color:#808080;">82</div>
<div class="t" style="left:675px;top:685px;font:11.6667px/17px 'Liberation Mono',monospace;color:#808080;">83</div>
<div class="t" style="left:675px;top:702px;font:11.6667px/17px 'Liberation Mono',monospace;color:#808080;">84</div>
<div class="t" style="left:675px;top:719px;font:11.6667px/17px 'Liberation Mono',monospace;color:#808080;">85</div>
<div class="t" style="left:675px;top:736px;font:11.6667px/17px 'Liberation Mono',monospace;color:#808080;">86</div>
<div class="t" style="left:675px;top:753px;font:11.6667px/17px 'Liberation Mono',monospace;color:#808080;">87</div>
<div class="t" style="left:675px;top:770px;font:11.6667px/17px 'Liberation Mono',monospace;color:#808080;">88</div>
<div class="t" style="left:675px;top:787px;font:11.6667px/17px 'Liberation Mono',monospace;color:#808080;">89</div>
<div class="t" style="left:675px;top:804px;font:11.6667px/17px 'Liberation Mono',monospace;color:#808080;">90</div>
<div class="t" style="left:675px;top:821px;font:11.6667px/17px 'Liberation Mono',monospace;color:#808080;">91</div>
<div class="t" style="left:675px;top:838px;font:11.6667px/17px 'Liberation Mono',monospace;color:#808080;">92</div>
<div class="t" style="left:675px;top:855px;font:11.6667px/17px 'Liberation Mono',monospace;color:#808080;">93</div>
<div class="code" style="left:903px;top:158px"><span style="color:#000080;">$sql_numcode</span><span style="color:#8000ff;">=</span><span style="color:#808080;">&quot;select * from tb_order&quot;</span><span style="color:#8000ff;">;</span></div>
<div class="code" style="left:903px;top:175px"><span style="color:#000080;">$db_queryr</span><span style="color:#8000ff;">=</span><span style="color:#0000ff;font-weight:bold;">mysql_db_query</span><span style="color:#8000ff;">(</span><span style="color:#000080;">$db</span><span style="color:#8000ff;">,</span><span style="color:#000080;">$sql_numcode</span><span style="color:#8000ff;">)</span><span style="color:#8000ff;">;</span></div>
<div class="code" style="left:903px;top:192px"><span style="color:#000080;">$result_numcode</span><span style="color:#8000ff;">=</span><span style="color:#0000ff;font-weight:bold;">mysql_fetch_array</span><span style="color:#8000ff;">(</span><span style="color:#000080;">$db_queryr</span><span style="color:#8000ff;">)</span><span style="color:#8000ff;">;</span></div>
<div class="code" style="left:903px;top:209px"><span style="color:#000080;">$num_rows_code</span><span style="color:#8000ff;">=</span><span style="color:#0000ff;font-weight:bold;">mysql_num_rows</span><span style="color:#8000ff;">(</span><span style="color:#000080;">$db_queryr</span><span style="color:#8000ff;">)</span><span style="color:#8000ff;">;</span></div>
<div class="code" style="left:903px;top:226px"><span style="color:#000080;">$run_number</span><span style="color:#000000;"> </span><span style="color:#8000ff;">=</span><span style="color:#000000;"> </span><span style="color:#000080;">$num_rows_code</span><span style="color:#8000ff;">+</span><span style="color:#ff8000;">1</span><span style="color:#8000ff;">;</span></div>
<div class="code" style="left:903px;top:243px"><span style="color:#000080;">$rand_num</span><span style="color:#8000ff;">=</span><span style="color:#000000;">sprintf</span><span style="color:#8000ff;">(</span><span style="color:#808080;">&quot;%05d&quot;</span><span style="color:#8000ff;">,</span><span style="color:#000080;">$run_number</span><span style="color:#8000ff;">)</span><span style="color:#8000ff;">;</span></div>
<div class="code" style="left:721px;top:277px"><span style="color:#000080;">$userCus</span><span style="color:#000000;"> </span><span style="color:#8000ff;">=</span><span style="color:#000000;"> </span><span style="color:#000080;">$_GET</span><span style="color:#8000ff;">[</span><span style="color:#000000;">user</span><span style="color:#8000ff;">]</span><span style="color:#8000ff;">;</span></div>
<div class="code" style="left:721px;top:294px"><span style="color:#000080;">$passCus</span><span style="color:#000000;"> </span><span style="color:#8000ff;">=</span><span style="color:#000000;"> </span><span style="color:#000080;">$_GET</span><span style="color:#8000ff;">[</span><span style="color:#000000;">pass</span><span style="color:#8000ff;">]</span><span style="color:#8000ff;">;</span></div>
<div class="code" style="left:721px;top:311px"><span style="color:#000080;">$sent_rate</span><span style="color:#000000;"> </span><span style="color:#8000ff;">=</span><span style="color:#000000;"> </span><span style="color:#000080;">$_GET</span><span style="color:#8000ff;">[</span><span style="color:#000000;">sr</span><span style="color:#8000ff;">]</span><span style="color:#8000ff;">;</span></div>
<div class="code" style="left:721px;top:328px"><span style="color:#000080;">$today</span><span style="color:#000000;"> </span><span style="color:#8000ff;">=</span><span style="color:#000000;"> </span><span style="color:#0000ff;font-weight:bold;">date</span><span style="color:#8000ff;">(</span><span style="color:#808080;">&quot;d-m-Y&quot;</span><span style="color:#8000ff;">)</span><span style="color:#8000ff;">;</span></div>
<div class="code" style="left:721px;top:345px"><span style="color:#000080;">$sql</span><span style="color:#8000ff;">=</span><span style="color:#808080;">&quot;select * from  member where usermem=&#x27;$usermem&#x27; &quot;</span><span style="color:#8000ff;">;</span></div>
<div class="code" style="left:805px;top:362px"><span style="color:#000080;">$result</span><span style="color:#8000ff;">=</span><span style="color:#0000ff;font-weight:bold;">mysql_db_query</span><span style="color:#8000ff;">(</span><span style="color:#000080;">$db</span><span style="color:#8000ff;">,</span><span style="color:#000080;">$sql</span><span style="color:#8000ff;">)</span><span style="color:#8000ff;">;</span></div>
<div class="code" style="left:805px;top:379px"><span style="color:#000080;">$rs</span><span style="color:#8000ff;">=</span><span style="color:#0000ff;font-weight:bold;">mysql_fetch_array</span><span style="color:#8000ff;">(</span><span style="color:#000080;">$result</span><span style="color:#8000ff;">)</span><span style="color:#8000ff;">;</span></div>
<div class="code" style="left:721px;top:413px"><span style="color:#000080;">$dateorder</span><span style="color:#000000;"> </span><span style="color:#8000ff;">=</span><span style="color:#000000;"> </span><span style="color:#000000;"> </span><span style="color:#0000ff;font-weight:bold;">date</span><span style="color:#8000ff;">(</span><span style="color:#808080;">&quot;$e_date&quot;</span><span style="color:#8000ff;">)</span><span style="color:#8000ff;">;</span></div>
<div class="code" style="left:721px;top:447px"><span style="color:#000080;">$dateime1</span><span style="color:#000000;"> </span><span style="color:#8000ff;">=</span><span style="color:#000000;"> </span><span style="color:#000080;">$dateorder</span><span style="color:#8000ff;">;</span></div>
<div class="code" style="left:721px;top:464px"><span style="color:#000080;">$date</span><span style="color:#000000;"> </span><span style="color:#8000ff;">=</span><span style="color:#000000;"> </span><span style="color:#0000ff;font-weight:bold;">explode</span><span style="color:#8000ff;">(</span><span style="color:#808080;">&#x27;/&#x27;</span><span style="color:#8000ff;">,</span><span style="color:#000000;"> </span><span style="color:#000080;">$dateime1</span><span style="color:#8000ff;">)</span><span style="color:#8000ff;">;</span></div>
<div class="code" style="left:721px;top:481px"><span style="color:#000080;">$newdate</span><span style="color:#000000;"> </span><span style="color:#8000ff;">=</span><span style="color:#000000;"> </span><span style="color:#0000ff;font-weight:bold;">implode</span><span style="color:#8000ff;">(</span><span style="color:#808080;">&#x27;-&#x27;</span><span style="color:#8000ff;">,</span><span style="color:#000000;"> </span><span style="color:#0000ff;font-weight:bold;">array</span><span style="color:#8000ff;">(</span><span style="color:#000080;">$date</span><span style="color:#8000ff;">[</span><span style="color:#ff8000;">2</span><span style="color:#8000ff;">]</span><span style="color:#8000ff;">,</span><span style="color:#000000;"> </span><span style="color:#000080;">$date</span><span style="color:#8000ff;">[</span><span style="color:#ff8000;">1</span><span style="color:#8000ff;">]</span><span style="color:#8000ff;">,</span><span style="color:#000000;"> </span><span style="color:#000080;">$date</span><span style="color:#8000ff;">[</span><span style="color:#ff8000;">0</span><span style="color:#8000ff;">]</span><span style="color:#8000ff;">)</span><span style="color:#8000ff;">)</span><span style="color:#8000ff;">;</span></div>
<div class="code" style="left:777px;top:515px"><span style="color:#0000ff;font-weight:bold;">for</span><span style="color:#000000;"> </span><span style="color:#8000ff;">(</span><span style="color:#000080;">$n</span><span style="color:#8000ff;">=</span><span style="color:#ff8000;">0</span><span style="color:#8000ff;">;</span><span style="color:#000080;">$n</span><span style="color:#8000ff;">&lt;</span><span style="color:#0000ff;font-weight:bold;">count</span><span style="color:#8000ff;">(</span><span style="color:#000080;">$sess_idproduct</span><span style="color:#8000ff;">)</span><span style="color:#8000ff;">;</span><span style="color:#000080;">$n</span><span style="color:#8000ff;">+</span><span style="color:#8000ff;">+</span><span style="color:#8000ff;">)</span><span style="color:#000000;"> </span><span style="color:#8000ff;">{</span></div>
<div class="code" style="left:777px;top:532px"><span style="color:#000080;">$sql1</span><span style="color:#8000ff;">=</span><span style="color:#000000;"> insert</span><span style="color:#8000ff;">(</span><span style="color:#808080;">&quot;pId,refid,pNum,pPrice,date,id_cus&quot;</span><span style="color:#8000ff;">,</span><span style="color:#808080;">&quot; &#x27;$sess_idproduct[$n]&#x27;,&#x27;$randnum&#x27;,&#x27;$sess_num[$n]&#x27;,&#x27;$sess_price[$n]&#x27;,&#x27;$today&#x27;,&#x27;$userCus&#x27;)&quot;);</span></div>
<div class="code" style="left:777px;top:549px"><span style="color:#0000ff;font-weight:bold;">mysql_db_query</span><span style="color:#8000ff;">(</span><span style="color:#000080;">$db</span><span style="color:#8000ff;">,</span><span style="color:#000080;">$sql1</span><span style="color:#8000ff;">)</span><span style="color:#8000ff;">;</span></div>
<div class="code" style="left:721px;top:583px"><span style="color:#000080;">$sql_data</span><span style="color:#000000;"> </span><span style="color:#8000ff;">=</span><span style="color:#000000;"> </span><span style="color:#808080;">&quot;update products set  amount = amount-$sess_num[$n] where productscode = &#x27;$sess_idproduct[$n]&#x27;&quot;</span><span style="color:#8000ff;">;</span></div>
<div class="code" style="left:721px;top:600px"><span style="color:#0000ff;font-weight:bold;">mysql_query</span><span style="color:#8000ff;">(</span><span style="color:#000080;">$sql_data</span><span style="color:#8000ff;">)</span><span style="color:#8000ff;">;</span></div>
<div class="code" style="left:721px;top:634px"><span style="color:#000080;">$sql_update_address</span><span style="color:#000000;"> </span><span style="color:#8000ff;">=</span><span style="color:#000000;"> </span><span style="color:#808080;">&quot;update tb_order set  address2 = &#x27;$address_new&#x27; where refid = &#x27;$randnum&#x27;&quot;</span><span style="color:#8000ff;">;</span></div>
<div class="code" style="left:721px;top:651px"><span style="color:#0000ff;font-weight:bold;">mysql_query</span><span style="color:#8000ff;">(</span><span style="color:#000080;">$sql_update_address</span><span style="color:#8000ff;">)</span><span style="color:#8000ff;">;</span></div>
<div class="code" style="left:721px;top:685px"><span style="color:#000080;">$sql_stats</span><span style="color:#000000;"> </span><span style="color:#8000ff;">=</span><span style="color:#000000;"> </span><span style="color:#808080;">&quot;update products set  stats = stats+1 where productscode = &#x27;$sess_idproduct[$n]&#x27;&quot;</span><span style="color:#8000ff;">;</span></div>
<div class="code" style="left:721px;top:702px"><span style="color:#0000ff;font-weight:bold;">mysql_query</span><span style="color:#8000ff;">(</span><span style="color:#000080;">$sql_stats</span><span style="color:#8000ff;">)</span><span style="color:#8000ff;">;</span></div>
<div class="code" style="left:721px;top:719px"><span style="color:#8000ff;">}</span></div>
<div class="code" style="left:721px;top:736px"><span style="color:#ff0000;">?&gt;</span></div>
<div class="code" style="left:721px;top:753px"><span style="color:#0000ff;">&lt;html&gt;</span></div>
<div class="code" style="left:721px;top:770px"><span style="color:#0000ff;">&lt;head&gt;</span></div>
<div class="code" style="left:721px;top:787px"><span style="color:#0000ff;">&lt;title&gt;</span><span style="color:#000000;">::</span><span style="color:#000000;"> </span><span style="color:#ff0000;">&lt;?</span><span style="color:#000000;"> </span><span style="color:#0000ff;font-weight:bold;">echo</span><span style="color:#000000;"> </span><span style="color:#808080;">&quot;$headtxt_web&quot;</span><span style="color:#8000ff;">;</span><span style="color:#000000;"> </span><span style="color:#ff0000;">?&gt;</span><span style="color:#000000;"> ::</span><span style="color:#0000ff;">&lt;/title&gt;</span></div>
<div class="code" style="left:721px;top:804px"><span style="color:#0000ff;">&lt;meta </span><span style="color:#ff0000;">http-equiv</span><span style="color:#000000;">=</span><span style="color:#8000ff;">&quot;Content-Type&quot;</span><span style="color:#000000;"> </span><span style="color:#ff0000;">content</span><span style="color:#000000;">=</span><span style="color:#8000ff;">&quot;text/html; charset=tis-620&quot;</span><span style="color:#0000ff;">&gt;</span></div>
<div class="code" style="left:721px;top:821px"><span style="color:#0000ff;">&lt;link </span><span style="color:#ff0000;">href</span><span style="color:#000000;">=</span><span style="color:#8000ff;">&quot;css/instyle.css&quot;</span><span style="color:#000000;"> </span><span style="color:#ff0000;">rel</span><span style="color:#000000;">=</span><span style="color:#8000ff;">&quot;stylesheet&quot;</span><span style="color:#000000;"> </span><span style="color:#ff0000;">type</span><span style="color:#000000;">=</span><span style="color:#8000ff;">&quot;text/css&quot;</span><span style="color:#0000ff;">&gt;</span></div>
<div class="code" style="left:721px;top:838px"><span style="color:#0000ff;">&lt;link </span><span style="color:#ff0000;">href</span><span style="color:#000000;">=</span><span style="color:#8000ff;">&quot;css/style1.css&quot;</span><span style="color:#000000;"> </span><span style="color:#ff0000;">rel</span><span style="color:#000000;">=</span><span style="color:#8000ff;">&quot;stylesheet&quot;</span><span style="color:#000000;"> </span><span style="color:#ff0000;">type</span><span style="color:#000000;">=</span><span style="color:#8000ff;">&quot;text/css&quot;</span><span style="color:#0000ff;">&gt;</span></div>
<div class="code" style="left:721px;top:855px"><span style="color:#0000ff;">&lt;link </span><span style="color:#ff0000;">href</span><span style="color:#000000;">=</span><span style="color:#8000ff;">&quot;css/style.css&quot;</span><span style="color:#000000;"> </span><span style="color:#ff0000;">rel</span><span style="color:#000000;">=</span><span style="color:#8000ff;">&quot;stylesheet&quot;</span><span style="color:#000000;"> </span><span style="color:#ff0000;">type</span><span style="color:#000000;">=</span><span style="color:#8000ff;">&quot;text/css&quot;</span><span style="color:#0000ff;">&gt;</span></div>
<svg style="position:absolute;left:760px;top:527px" width="24" height="22" viewBox="0 0 24 22">
<g fill="#ed1c24"><circle cx="12" cy="10" r="4.5"/><circle cx="10" cy="5.5" r="2.2"/><circle cx="15" cy="5.5" r="2.3"/><circle cx="18" cy="9.5" r="2.2"/><circle cx="16.5" cy="14" r="2"/><circle cx="11.5" cy="15.5" r="2.3"/><circle cx="7" cy="12.5" r="2.4"/><circle cx="8.5" cy="9" r="2"/></g></svg>

<div style="position:absolute;left:1596px;top:157px;width:10px;height:708px;background:#f0f0f0;border-left:1px solid #e0e0e0"></div>
<div style="position:absolute;left:1597px;top:229px;width:10px;height:40px;background:linear-gradient(90deg,#f6f6f6,#dcdcdc);border:1px solid #9a9a9a;border-radius:2px"></div>


<div style="position:absolute;left:663px;top:865px;width:940px;height:17px;background:linear-gradient(#e4e4e4,#f0f0f0 30%,#f0f0f0)"></div>
<svg style="position:absolute;left:665px;top:868px" width="10" height="11"><path d="M7,1.5 L3,5.5 L7,9.5 Z" fill="#3a3a3a"/></svg>
<div style="position:absolute;left:681px;top:866px;width:518px;height:14px;border:1px solid #9a9a9a;border-radius:2px;background:linear-gradient(#f8f8f8,#ececec 45%,#d8d8d8 50%,#dedede)"></div>
<div style="position:absolute;left:938px;top:870px;width:6px;height:7px;background:repeating-linear-gradient(90deg,#6a6a6a 0 1px,transparent 1px 2px)"></div>
<svg style="position:absolute;left:1584px;top:868px" width="10" height="11"><path d="M3,1.5 L7,5.5 L3,9.5 Z" fill="#3a3a3a"/></svg>


<div style="position:absolute;left:656px;top:883px;width:950px;height:4px;background:#f0f0f0"></div>
<div style="position:absolute;left:656px;top:887px;width:950px;height:2px;background:#646464"></div>
<div style="position:absolute;left:656px;top:889px;width:950px;height:12px;background:#f0eeee"></div>

<div style="position:absolute;left:909px;top:891px;width:1px;height:10px;background:#b8b8b8"></div>
<div style="position:absolute;left:1109px;top:891px;width:1px;height:10px;background:#b8b8b8"></div>
<div style="position:absolute;left:1340px;top:891px;width:1px;height:10px;background:#b8b8b8"></div>
<div style="position:absolute;left:1449px;top:891px;width:1px;height:10px;background:#b8b8b8"></div>
<div style="position:absolute;left:1569px;top:891px;width:1px;height:10px;background:#b8b8b8"></div>
<div class="t" style="left:658px;top:896px;font:12px 'Liberation Sans',sans-serif;color:#000;transform:scaleX(0.9332);">PHP Hypertext Preprocessor file</div>
<div class="t" style="left:913px;top:896px;font:12px 'Liberation Sans',sans-serif;color:#000;transform:scaleX(0.9368);">length : 27544    lines : 631</div>
<div class="t" style="left:1114px;top:896px;font:12px 'Liberation Sans',sans-serif;color:#000;transform:scaleX(0.9086);">Ln : 68    Col : 1    Sel : 0</div>
<div class="t" style="left:1344px;top:896px;font:12px 'Liberation Sans',sans-serif;color:#000;transform:scaleX(0.8860);">Dos\Windows</div>
<div class="t" style="left:1455px;top:896px;font:12px 'Liberation Sans',sans-serif;color:#000;transform:scaleX(0.8924);">ANSI</div>
<div class="t" style="left:1573px;top:896px;font:12px 'Liberation Sans',sans-serif;color:#000;transform:scaleX(0.9493);">INS</div>
<svg style="position:absolute;left:0;top:0" width="1600" height="900"><path d="M608.5,157.5 C607,153 607.5,149 610.5,147 C620,146 632,146 638,146.5 C644,147.5 649,149 651.5,152 C652,158 652,163 651,167 C649.5,174 647,180 645,183 C642,187 640,189.5 637.5,190.5 C634,191 631,191 629,190 C625,187 623,183 621,178 C618,169 614,158 611,150" fill="none" stroke="#ed1c24" stroke-width="3" stroke-linecap="round" stroke-linejoin="round"/></svg>
</body></html>
